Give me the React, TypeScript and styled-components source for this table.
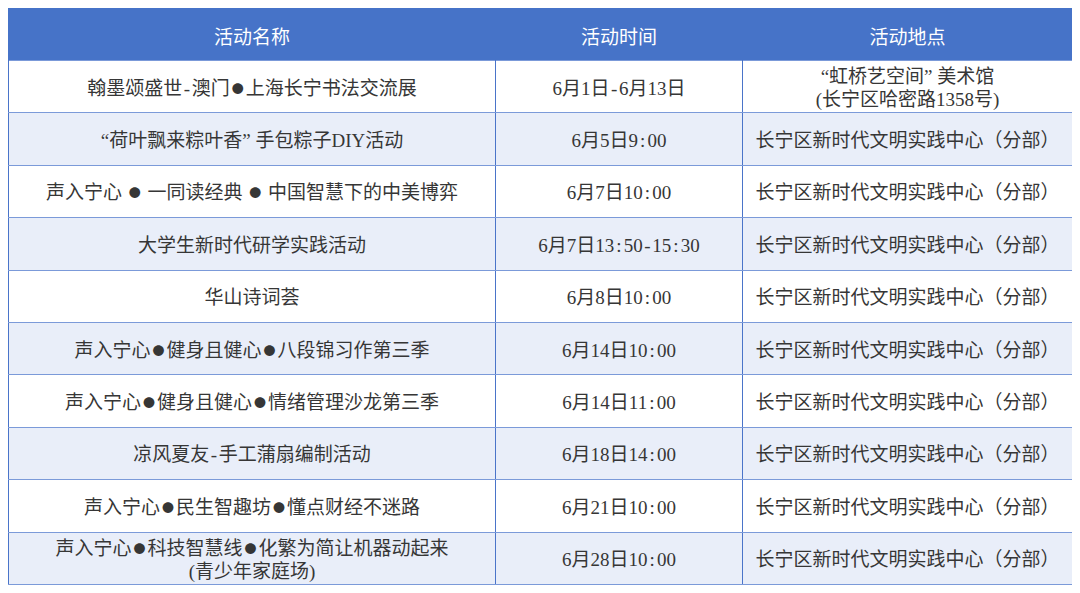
import {FC, ReactNode} from 'react';
import styled, {createGlobalStyle} from 'styled-components';

interface Activity {
  name: string[];
  time: string;
  place: string[];
}

const DEFAULT_PLACE = ['长宁区新时代文明实践中心（分部）'];

const activities: Activity[] = [
  {name: ['翰墨颂盛世-澳门●上海长宁书法交流展'], time: '6月1日-6月13日', place: ['“虹桥艺空间” 美术馆', '(长宁区哈密路1358号)']},
  {name: ['“荷叶飘来粽叶香” 手包粽子DIY活动'], time: '6月5日9:00', place: DEFAULT_PLACE},
  {name: ['声入宁心 ● 一同读经典 ● 中国智慧下的中美博弈'], time: '6月7日10:00', place: DEFAULT_PLACE},
  {name: ['大学生新时代研学实践活动'], time: '6月7日13:50-15:30', place: DEFAULT_PLACE},
  {name: ['华山诗词荟'], time: '6月8日10:00', place: DEFAULT_PLACE},
  {name: ['声入宁心●健身且健心●八段锦习作第三季'], time: '6月14日10:00', place: DEFAULT_PLACE},
  {name: ['声入宁心●健身且健心●情绪管理沙龙第三季'], time: '6月14日11:00', place: DEFAULT_PLACE},
  {name: ['凉风夏友-手工蒲扇编制活动'], time: '6月18日14:00', place: DEFAULT_PLACE},
  {name: ['声入宁心●民生智趣坊●懂点财经不迷路'], time: '6月21日10:00', place: DEFAULT_PLACE},
  {name: ['声入宁心●科技智慧线●化繁为简让机器动起来', '(青少年家庭场)'], time: '6月28日10:00', place: DEFAULT_PLACE},
];

const GlobalStyle = createGlobalStyle`
  body {
    margin: 8px;
    background: #ffffff;
    font-family: "Liberation Serif", "Noto Sans CJK SC", sans-serif;
  }
`;

// bullets and the half-width punctuation of the original (SimSun-like) need their own spans
const renderText = (value: string): ReactNode[] =>
  value.split(/([●:\-])/).map((part, i) => {
    if (part === '●') return <Bullet key={i}>●</Bullet>;
    if (part === ':' || part === '-') return <Mono key={i}>{part}</Mono>;
    return <span key={i}>{part}</span>;
  });

const App: FC = () => (
  <>
    <GlobalStyle />
    <Table>
      <colgroup>
        <col style={{width: 487}} />
        <col style={{width: 247}} />
        <col style={{width: 330}} />
      </colgroup>
      <thead>
        <tr>
          <HeadCell>活动名称</HeadCell>
          <HeadCell>活动时间</HeadCell>
          <HeadCell>活动地点</HeadCell>
        </tr>
      </thead>
      <tbody>
        {activities.map((a, idx) => (
          <Row key={idx} $striped={idx % 2 === 1}>
            <Cell>
              {a.name.map((line) => (
                <Line key={line}>{renderText(line)}</Line>
              ))}
            </Cell>
            <Cell>{renderText(a.time)}</Cell>
            <Cell>
              {a.place.map((line) => (
                <Line key={line}>{line}</Line>
              ))}
            </Cell>
          </Row>
        ))}
      </tbody>
    </Table>
  </>
);

const Table = styled.table`
  width: 1064px;
  table-layout: fixed;
  border-collapse: collapse;
  color: #363636;
  font-size: 19px;
`;

const HeadCell = styled.th`
  height: 50px;
  padding: 2px 0 0;
  background: #4673c8;
  color: #ffffff;
  font-family: "Noto Sans CJK SC", sans-serif;
  font-weight: 400;
  font-size: 19px;
  text-align: center;
  border-left: 1px solid #4673c8;
  border-right: 1px solid #4673c8;
`;

const Row = styled.tr<{$striped: boolean}>`
  height: 52.4px;
  background: ${({$striped}) => ($striped ? '#e9eef9' : '#ffffff')};
`;

const Cell = styled.td`
  padding: 3px 4px 0;
  text-align: center;
  vertical-align: middle;
  line-height: 23px;
  border-top: 1px solid #7b9ad9;
  border-bottom: 1px solid #7b9ad9;
  border-left: 1px solid #4a74c9;
  border-right: 1px solid #4a74c9;
`;

const Line = styled.div`
  white-space: nowrap;
`;

const Bullet = styled.span`
  font-family: "Noto Sans CJK SC", sans-serif;
  font-size: 12px;
  margin: 0 2px;
  vertical-align: 1px;
`;

const Mono = styled.span`
  display: inline-block;
  width: 0.5em;
  text-align: center;
`;

export default App;
